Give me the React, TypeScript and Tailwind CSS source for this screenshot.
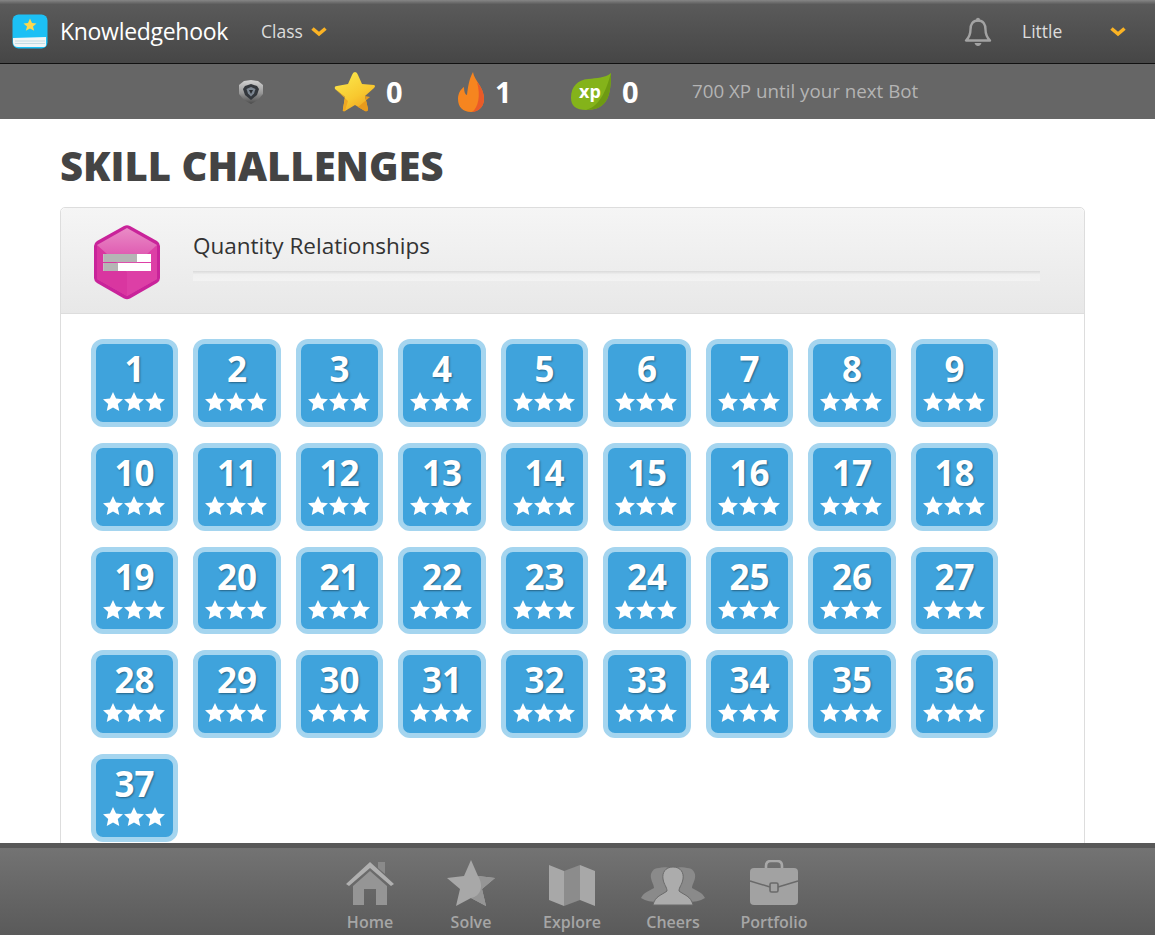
const levels = Array.from({ length: 37 }, (_, i) => i + 1);

const Chevron = () => (
  <svg width="16" height="11" viewBox="0 0 16 11">
    <path d="M1.5 2.5 L8 8 L14.5 2.5" fill="none" stroke="#fbb324" strokeWidth="3.6" />
  </svg>
);

const BookLogo = () => (
  <svg width="36" height="35" viewBox="0 0 36 35">
    <rect x="0.5" y="0.5" width="35" height="34" rx="6" fill="#1cc0f5" />
    <path d="M1 24 L34 23 L34 31 Q34 33 31 33 L6 33 Q1 33 1 28 Z" fill="#f1f5f6" />
    <path d="M3 27 H33 M3 29.5 H33" stroke="#b9d6de" strokeWidth="0.8" />
    <path
      d="M18 4.5 L20 9 L24.5 9.4 L21 12.4 L22.2 16.8 L18 14.4 L13.8 16.8 L15 12.4 L11.5 9.4 L16 9 Z"
      fill="#fcd84e"
    />
  </svg>
);

const Bell = () => (
  <svg width="28" height="30" viewBox="0 0 28 30">
    <path
      d="M14 3.5 C8.5 3.5 6.5 8 6.5 12.5 C6.5 18 4.5 21 2 23.5 L26 23.5 C23.5 21 21.5 18 21.5 12.5 C21.5 8 19.5 3.5 14 3.5 Z"
      fill="none"
      stroke="#a3a3a3"
      strokeWidth="2.4"
      strokeLinejoin="round"
    />
    <circle cx="14" cy="2.8" r="2" fill="#a3a3a3" />
    <path d="M10.5 26 H17.5 Q16.5 29 14 29 Q11.5 29 10.5 26 Z" fill="#a3a3a3" />
  </svg>
);

const Shield = () => (
  <svg width="26" height="26" viewBox="0 0 26 26">
    <defs>
      <linearGradient id="shieldRim" x1="0" y1="0" x2="0" y2="1">
        <stop offset="0" stopColor="#d4d4d4" />
        <stop offset="0.55" stopColor="#969696" />
        <stop offset="1" stopColor="#4a4a4a" />
      </linearGradient>
    </defs>
    <path d="M13 1 L20 2 L25 6 L25 15 L20 21 L13 25 L6 21 L1 15 L1 6 L6 2 Z" fill="url(#shieldRim)" />
    <path d="M13 5 L19 7 L21 10 L19 16 L13 21 L7 16 L5 10 L7 7 Z" fill="#33373c" />
    <path d="M13 8 L17.5 10 L16 14.5 L13 17.5 L10 14.5 L8.5 10 Z" fill="#7b8590" />
    <path d="M11 11 L15 11 L13 15 Z" fill="#2a2d31" />
  </svg>
);

const GoldStar = () => (
  <svg width="42" height="42" viewBox="0 0 42 42">
    <defs>
      <linearGradient id="goldStar" x1="0.2" y1="0" x2="0.8" y2="1">
        <stop offset="0" stopColor="#fbe84c" />
        <stop offset="0.6" stopColor="#f8c82f" />
        <stop offset="1" stopColor="#ef9f1e" />
      </linearGradient>
    </defs>
    <path
      d="M21 1 Q23 1 24 4 L28 13 L40 14 Q42 15 40 17 L31 25 L34 38 Q34 41 31 40 L21 34 L11 40 Q8 41 9 38 L11 26 L1 18 Q0 15 3 15 L14 13 L18 4 Q19 1 21 1 Z"
      fill="url(#goldStar)"
    />
    <path d="M31 25 L34 38 Q34 41 31 40 L24 36 L36 26 Z" fill="#e89a1c" />
    <path d="M1 18 L11 26 L9 38 Q8 41 11 40 L14 30 Z" fill="#f0a823" />
  </svg>
);

const Flame = () => (
  <svg width="26" height="40" viewBox="0 0 26 40">
    <path
      d="M15 0 C16 8 26 15 26 27 C26 35 20 40 13 40 C5 40 0 35 0 27 C0 21 3 17 6 15 C6 19 7 23 9 23 C10 15 11 7 15 0 Z"
      fill="#f6851f"
    />
    <path d="M19 10 C23 15 26 20 26 27 C26 35 20 40 14 40 C20 36 23 24 19 10 Z" fill="#ea5a28" />
  </svg>
);

const XpLeaf = () => (
  <svg width="40" height="38" viewBox="0 0 40 38">
    <path
      d="M40 0 C40 22 37 37 15 37 C5 37 0 33 0 25 C0 13 7 7 17 6 C26 5 34 5 40 0 Z"
      fill="#84b31a"
    />
    <path d="M40 0 C40 22 37 37 15 37 C29 33 35 18 40 0 Z" fill="#6e9a12" />
    <text
      x="19"
      y="25"
      textAnchor="middle"
      fill="#ffffff"
      fontSize="18"
      fontWeight="700"
      fontFamily="'Open Sans', sans-serif"
    >
      xp
    </text>
  </svg>
);

const Hexagon = () => (
  <svg width="68" height="76" viewBox="0 0 68 76" className="mt-[3px]">
    <defs>
      <linearGradient id="hexTop" gradientUnits="userSpaceOnUse" x1="0" y1="4" x2="0" y2="42">
        <stop offset="0" stopColor="#e98cc6" />
        <stop offset="1" stopColor="#dc48aa" />
      </linearGradient>
    </defs>
    <path
      d="M31 2 Q34 0.5 37 2 L64 17 Q67 19 67 22 L67 54 Q67 57 64 59 L37 74.5 Q34 76 31 74.5 L4 59 Q1 57 1 54 L1 22 Q1 19 4 17 Z"
      fill="#c9239a"
    />
    <path d="M34 4 L64 21 L64 55 L34 72 L4 55 L4 21 Z" fill="url(#hexTop)" />
    <path d="M4 21 L4 55 L34 72 L34 48 Z" fill="#d936a0" />
    <path d="M64 21 L64 55 L34 72 L34 48 Z" fill="#dd3fa6" />
    <rect x="10.3" y="30" width="47.7" height="8" fill="#ffffff" />
    <rect x="10.3" y="30" width="33.7" height="8" fill="#b5b5b5" />
    <rect x="10.3" y="39" width="47.7" height="8" fill="#ffffff" />
    <rect x="10.3" y="39" width="14.7" height="8" fill="#b5b5b5" />
  </svg>
);

const TileStar = () => (
  <svg width="20" height="19" viewBox="0.4 0.5 19.2 18.1">
    <path d="M10 0.5 L12.9 6.6 L19.6 7.4 L14.6 12 L16 18.6 L10 15.3 L4 18.6 L5.4 12 L0.4 7.4 L7.1 6.6 Z" fill="#ffffff" />
  </svg>
);

const HomeIcon = () => (
  <svg width="50" height="46" viewBox="0 0 50 46">
    <path d="M33 2 H40 V14 L33 8 Z" fill="#8a8a8a" />
    <path d="M1 24 L25 2 L49 24 L46 26 L25 8 L4 26 Z" fill="#b0b0b0" />
    <path d="M8 26 L25 11 L42 26 V45 H31 V29 H19 V45 H8 Z" fill="#959595" />
  </svg>
);

const StarIcon = () => (
  <svg width="50" height="46" viewBox="0 0 50 46">
    <path d="M25 0 L32 16 L49 18 L36 29 L40 46 L25 38 L10 46 L14 29 L1 18 L18 16 Z" fill="#a8a8a8" />
    <path d="M32 16 L49 18 L36 29 L40 46 L25 38 C35 36 38 26 32 16 Z" fill="#959595" />
  </svg>
);

const MapIcon = () => (
  <svg width="48" height="42" viewBox="0 0 48 42">
    <path d="M1 1 L16 7 V42 L1 36 Z" fill="#a8a8a8" />
    <path d="M16 7 L32 1 V36 L16 42 Z" fill="#8c8c8c" />
    <path d="M32 1 L47 7 V42 L32 36 Z" fill="#a8a8a8" />
  </svg>
);

const PeopleIcon = () => (
  <svg width="64" height="40" viewBox="0 0 64 40">
    <path
      d="M18 2 C12 2 9 7 10 12 C11 17 13 19 13 22 C8 25 3 26 0 32 C5 35 11 36 16 36 L40 10 C36 2 24 0 18 2 Z"
      fill="#8a8a8a"
    />
    <path
      d="M46 2 C52 2 55 7 54 12 C53 17 51 19 51 22 C56 25 61 26 64 32 C59 35 53 36 48 36 L24 10 C28 2 40 0 46 2 Z"
      fill="#8a8a8a"
    />
    <path
      d="M32 1 C24 1 21 7 22 13 C23 19 26 21 26 25 C21 29 14 30 12 39 H52 C50 30 43 29 38 25 C38 21 41 19 42 13 C43 7 40 1 32 1 Z"
      fill="#acacac"
      stroke="#6a6a6a"
      strokeWidth="1"
    />
  </svg>
);

const BriefcaseIcon = () => (
  <svg width="50" height="46" viewBox="0 0 50 46">
    <path d="M17 9 V6 Q17 1 22 1 H28 Q33 1 33 6 V9" fill="none" stroke="#a8a8a8" strokeWidth="2.6" />
    <rect x="1" y="8" width="48" height="37" rx="4" fill="#a2a2a2" />
    <path d="M1 21 L21 27 M29 27 L49 21" stroke="#6a6a6a" strokeWidth="1.4" />
    <rect x="21" y="23" width="8" height="9" rx="1.5" fill="#a2a2a2" stroke="#6a6a6a" strokeWidth="1.6" />
  </svg>
);

const navItems = [
  { label: "Home", icon: <HomeIcon /> },
  { label: "Solve", icon: <StarIcon /> },
  { label: "Explore", icon: <MapIcon /> },
  { label: "Cheers", icon: <PeopleIcon /> },
  { label: "Portfolio", icon: <BriefcaseIcon /> },
];

export default function App() {
  return (
    <div className="flex h-[935px] flex-col overflow-hidden bg-white font-['Open_Sans',sans-serif]">
      {/* Top bar */}
      <header className="flex h-[64px] shrink-0 items-center border-b border-[#111111] bg-gradient-to-b from-[#868686] via-[#5a5a5a] via-[7%] to-[#464646] pl-[12px]">
        <BookLogo />
        <span className="ml-[12px] text-[23px] tracking-[-0.3px] text-white">Knowledgehook</span>
        <span className="ml-[33px] text-[17.5px] text-[#dddddd]">Class</span>
        <span className="ml-[8px] flex">
          <Chevron />
        </span>
        <div className="ml-auto flex items-center pr-[29px]">
          <Bell />
          <span className="ml-[30px] w-[88px] text-[17.5px] text-[#dddddd]">Little</span>
          <Chevron />
        </div>
      </header>

      {/* Stats bar */}
      <div className="flex h-[55px] shrink-0 items-center bg-[#666666] pl-[238px]">
        <Shield />
        <span className="ml-[70px] flex">
          <GoldStar />
        </span>
        <span className="ml-[10px] w-[72px] text-[29px] font-bold text-white">0</span>
        <Flame />
        <span className="ml-[11px] w-[76px] text-[29px] font-bold text-white">1</span>
        <XpLeaf />
        <span className="ml-[11px] w-[70px] text-[29px] font-bold text-white">0</span>
        <span className="text-[18.75px] text-[#b4b4b4]">700 XP until your next Bot</span>
      </div>

      {/* Content */}
      <main className="min-h-0 flex-1 overflow-hidden px-[60px]">
        <h1 className="mt-[20px] text-[40px] leading-[54px] font-extrabold text-[#444444]">SKILL CHALLENGES</h1>
        <section className="mt-[14px] w-[1025px] rounded-t-[5px] border border-[#dddddd] pb-[40px]">
          <div className="flex h-[106px] items-center rounded-t-[5px] border-b border-[#dddddd] bg-gradient-to-b from-[#f5f5f5] to-[#e8e8e8] pl-[32px]">
            <Hexagon />
            <div className="ml-[32px] w-[847px] pb-[9px]">
              <div className="text-[22.5px] leading-[30px] text-[#333333]">Quantity Relationships</div>
              <div className="mt-[10px] h-[10px] bg-gradient-to-b from-[#dadada] via-[#f0f0f0] via-[35%] to-[#f3f3f3]" />
            </div>
          </div>
          <div className="flex flex-wrap gap-x-[15px] gap-y-[16px] pt-[25px] pl-[29.7px]">
            {levels.map((n) => (
              <div
                key={n}
                className="flex h-[87.75px] w-[87.5px] flex-col items-center rounded-[12px] border-[5px] border-[#a5d5ef] bg-[#3fa3dc]"
              >
                <span className="mt-[4px] text-[35px] leading-[42px] font-bold text-white [text-shadow:1px_1px_2px_rgba(0,0,0,0.4)]">
                  {n}
                </span>
                <div className="mt-[2px] flex gap-[1px] pr-[1px]">
                  <TileStar />
                  <TileStar />
                  <TileStar />
                </div>
              </div>
            ))}
          </div>
        </section>
      </main>

      {/* Bottom nav */}
      <footer className="h-[92px] shrink-0 border-t-[5px] border-[#585858] bg-gradient-to-b from-[#737373] to-[#5a5a5a]">
        <nav className="flex justify-center pr-[11px]">
          {navItems.map((item) => (
            <div key={item.label} className="flex w-[101px] flex-col items-center">
              <div className="flex h-[58px] items-end">{item.icon}</div>
              <span className="mt-[5px] text-[16px] leading-[22px] font-semibold text-[#a6a6a6]">{item.label}</span>
            </div>
          ))}
        </nav>
      </footer>
    </div>
  );
}
